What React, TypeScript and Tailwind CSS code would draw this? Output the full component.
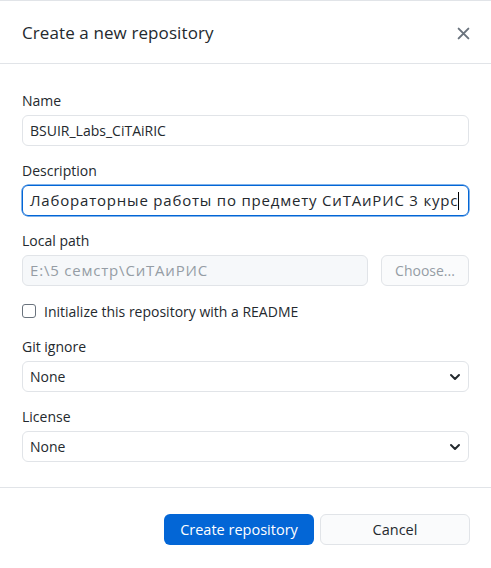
import { ReactNode } from "react";

const font = { fontFamily: '"Open Sans", "Noto Sans", sans-serif' };

function Label({ children }: { children: ReactNode }) {
  return <div className="h-5 leading-5 text-[14px] text-[#24292e]">{children}</div>;
}

function Chevron() {
  return (
    <svg width="12" height="12" viewBox="0 0 12 12" className="text-[#24292e]">
      <path d="M2 4l4 4 4-4" fill="none" stroke="currentColor" strokeWidth="2" strokeLinecap="round" strokeLinejoin="round" />
    </svg>
  );
}

function Select({ value }: { value: string }) {
  return (
    <div className="mt-1 h-[31px] flex items-center justify-between px-[7px] rounded-md border border-[#e1e4e8] bg-white text-[14px] text-[#24292e]">
      <span>{value}</span>
      <Chevron />
    </div>
  );
}

export default function App() {
  return (
    <div className="w-[491px] h-[568px] bg-white border-t border-[#e1e4e8] flex flex-col" style={font}>
      <div className="h-[63px] pt-[2px] flex items-center justify-between px-[22px] border-b border-[#e1e4e8]">
        <div className="text-[17px] text-[#24292e] tracking-[0.1px]">Create a new repository</div>
        <svg width="13" height="13" viewBox="0 0 12 12" className="text-[#6a737d] mr-[-1px]">
          <path d="M1.5 1.5l9 9M10.5 1.5l-9 9" stroke="currentColor" strokeWidth="1.8" strokeLinecap="round" />
        </svg>
      </div>

      <div className="px-[22px] pt-[27px] pb-[25px] flex flex-col border-b border-[#e1e4e8]">
        <Label>Name</Label>
        <div className="mt-1 h-[31px] flex items-center px-[7px] rounded-md border border-[#e1e4e8] text-[14px] text-[#24292e]">
          BSUIR_Labs_CiTAiRIC
        </div>

        <div className="mt-[15px]">
          <Label>Description</Label>
        </div>
        <div className="mt-1 h-[31px] flex items-center px-[7px] rounded-md border border-[#0366d6] shadow-[0_0_0_0.5px_#0366d6] text-[15px] tracking-[0.8px] text-[#24292e]">
          <span>Лабораторные работы по предмету СиТАиРИС 3 курс</span>
          <span className="w-px h-[18px] bg-black"></span>
        </div>

        <div className="mt-[15px]">
          <Label>Local path</Label>
        </div>
        <div className="mt-1 flex gap-[13px]">
          <div className="flex-1 h-[31px] flex items-center px-[7px] rounded-md border border-[#e1e4e8] bg-[#f6f8fa] text-[15px] tracking-[0.8px] text-[#959da5]">
            E:\5 семстр\СиТАиРИС
          </div>
          <div className="w-[88px] h-[31px] flex items-center justify-center rounded-md border border-[#e1e4e8] bg-[#fafbfc] text-[14px] text-[#959da5]">
            Choose...
          </div>
        </div>

        <div className="mt-[15px] h-5 flex items-center gap-[8px] text-[14px] text-[#24292e]">
          <div className="w-[14px] h-[14px] rounded-[3px] border border-[#6a737d] bg-white"></div>
          <span>Initialize this repository with a README</span>
        </div>

        <div className="mt-4">
          <Label>Git ignore</Label>
        </div>
        <Select value="None" />

        <div className="mt-[15px]">
          <Label>License</Label>
        </div>
        <Select value="None" />
      </div>

      <div className="flex justify-end gap-[6px] px-[21px] pt-[26px]">
        <div className="w-[150px] h-[31px] flex items-center justify-center rounded-md bg-[#0366d6] text-white text-[14.5px]">
          Create repository
        </div>
        <div className="w-[150px] h-[31px] flex items-center justify-center rounded-md border border-[#e1e4e8] bg-[#fafbfc] text-[#24292e] text-[14.5px]">
          Cancel
        </div>
      </div>
    </div>
  );
}
